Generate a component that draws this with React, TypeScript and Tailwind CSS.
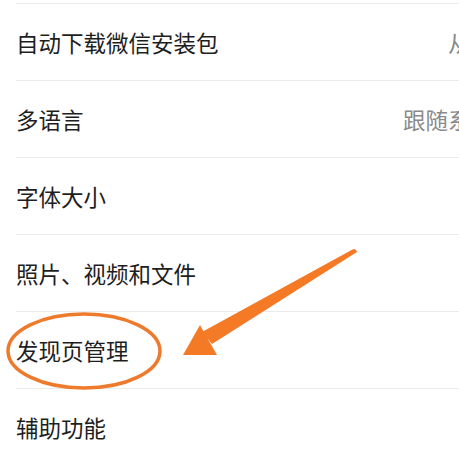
import React from "react";

const rows: { label: string; value?: string }[] = [
  { label: "自动下载微信安装包", value: "从不" },
  { label: "多语言", value: "跟随系统" },
  { label: "字体大小" },
  { label: "照片、视频和文件" },
  { label: "发现页管理" },
  { label: "辅助功能" },
];

export default function App() {
  return (
    <div
      className="relative w-[459px] h-[462px] overflow-hidden bg-white"
      style={{ fontFamily: '"Noto Sans CJK SC", "Noto Sans", sans-serif' }}
    >
      <div className="w-[540px] pt-[3px]">
        {rows.map((r) => (
          <div key={r.label} className="ml-[16px] border-t border-[#ebebeb]">
            <div className="h-[76px] flex items-center justify-between pr-[47px]">
              <span className="text-[22.5px] leading-none text-[#1e1e1e]">{r.label}</span>
              {r.value && (
                <span className="text-[22.5px] leading-none text-[#8a8a8a]">{r.value}</span>
              )}
            </div>
          </div>
        ))}
      </div>
      <svg
        className="absolute left-0 top-0 pointer-events-none"
        width="459"
        height="462"
        viewBox="0 0 459 462"
      >
        <ellipse cx="84" cy="351" rx="76" ry="37" fill="none" stroke="#ee7a2c" strokeWidth="3.5" />
        <path d="M352.5 249.5 Q356 248 357 252 L212 344 L202 332 Z" fill="#f47a26" />
        <polygon points="183,355 200,325 217,355" fill="#f47a26" />
      </svg>
    </div>
  );
}
